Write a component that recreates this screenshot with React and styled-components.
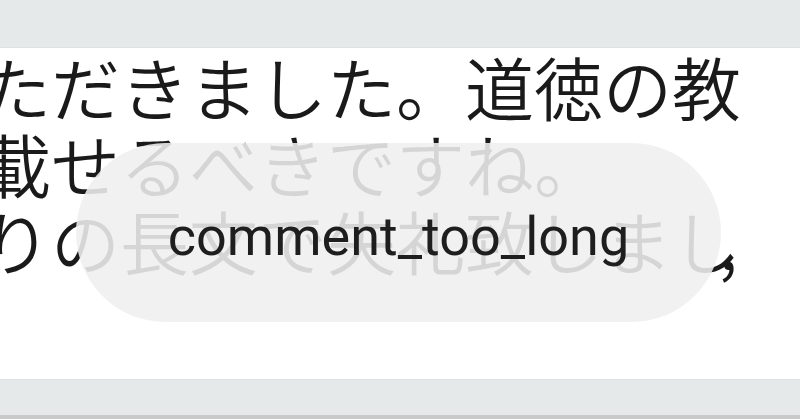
import styled, { createGlobalStyle } from "styled-components";

const GlobalStyle = createGlobalStyle`
  html, body {
    margin: 0;
    padding: 0;
    background: #ffffff;
  }
  body {
    width: 800px;
    height: 419px;
    overflow: hidden;
  }
`;

const Screen = styled.div`
  width: 800px;
  height: 419px;
  display: flex;
  flex-direction: column;
  overflow: hidden;
`;

const TopBar = styled.div`
  height: 47px;
  background: #e6e9ea;
  border-bottom: 1px solid #dfe2e3;
`;

const Content = styled.div`
  position: relative;
  flex: 1;
  background: #fff;
  overflow: hidden;
`;

const Paragraph = styled.div`
  margin-left: -18px;
  font-family: "Noto Sans CJK JP", "Noto Sans", sans-serif;
  font-size: 69px;
  font-weight: 350;
  line-height: 77px;
  color: #1a1a1a;
`;

const Line = styled.div`
  white-space: nowrap;
`;

const Comma = styled.span`
  margin-left: -22px;
`;

const Toast = styled.div`
  position: absolute;
  left: 76px;
  top: 95px;
  width: 645px;
  height: 179px;
  border-radius: 90px;
  background: rgba(239, 239, 239, 0.88);
  display: flex;
  align-items: center;
  justify-content: center;
`;

const ToastText = styled.span`
  font-family: Roboto, "Noto Sans", sans-serif;
  font-size: 54px;
  color: #1e1e1e;
  margin-top: 8px;
`;

const BottomBar = styled.div`
  height: 35px;
  background: #e6e9ea;
  border-top: 1px solid #dfe2e3;
`;

const BottomEdge = styled.div`
  height: 4px;
  background: #c9c9c9;
`;

export default function App() {
  return (
    <>
      <GlobalStyle />
      <Screen>
        <TopBar />
        <Content>
          <Paragraph>
            <Line>ただきました。道徳の教</Line>
            <Line>載せるべきですね。</Line>
            <Line>
              りの長文で失礼致しまし<Comma>,</Comma>
            </Line>
          </Paragraph>
          <Toast>
            <ToastText>comment_too_long</ToastText>
          </Toast>
        </Content>
        <BottomBar />
        <BottomEdge />
      </Screen>
    </>
  );
}
